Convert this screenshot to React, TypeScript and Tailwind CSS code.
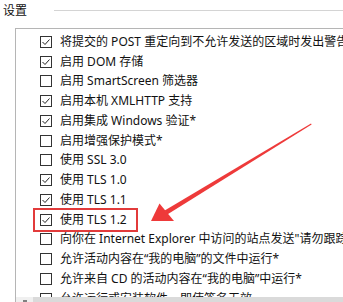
const rows: { label: string; checked: boolean }[] = [
  { label: '将提交的 POST 重定向到不允许发送的区域时发出警告', checked: true },
  { label: '启用 DOM 存储', checked: true },
  { label: '启用 SmartScreen 筛选器', checked: false },
  { label: '启用本机 XMLHTTP 支持', checked: true },
  { label: '启用集成 Windows 验证*', checked: true },
  { label: '启用增强保护模式*', checked: false },
  { label: '使用 SSL 3.0', checked: false },
  { label: '使用 TLS 1.0', checked: true },
  { label: '使用 TLS 1.1', checked: true },
  { label: '使用 TLS 1.2', checked: true },
  { label: '向你在 Internet Explorer 中访问的站点发送"请勿跟踪"请求', checked: false },
  { label: '允许活动内容在“我的电脑”的文件中运行*', checked: false },
  { label: '允许来自 CD 的活动内容在“我的电脑”中运行*', checked: false },
  { label: '允许运行或安装软件，即使签名无效', checked: false },
];

function CheckBox({ checked }: { checked: boolean }) {
  return (
    <svg width="12" height="12" viewBox="0 0 12 12" className="shrink-0">
      <rect x="0.5" y="0.5" width="11" height="11" fill="#fff" stroke="#333" />
      {checked && (
        <polyline points="2.5,6 5,8.5 9.5,3.5" fill="none" stroke="#222" strokeWidth="1" />
      )}
    </svg>
  );
}

export default function App() {
  return (
    <div className="relative w-[343px] h-[302px] overflow-hidden bg-white text-[12px] text-[#111] font-['Noto_Sans','Noto_Sans_CJK_SC',sans-serif] flex flex-col">
      <div className="flex items-center h-[20px] pl-[3px] pt-[1px]">
        <span className="leading-none">设置</span>
        <div className="flex-1 ml-[27px] h-px bg-[#d4d4d4]" />
      </div>
      <div className="mt-[8px] ml-[15px] flex-1 border-l border-t border-[#b5b5b5] flex flex-col overflow-hidden">
        <div className="flex-1 overflow-hidden pt-[3px] pl-[24px]">
          {rows.map((r) => (
            <div key={r.label} className="h-[19.75px] flex items-center gap-[8px] whitespace-nowrap">
              <CheckBox checked={r.checked} />
              <span className="leading-none">{r.label}</span>
            </div>
          ))}
        </div>
        {/* horizontal scrollbar, cut by the screenshot edge */}
        <div className="h-[5px] flex items-end bg-[#f0f0f0]">
          <div className="w-[17px] h-full flex items-end justify-center">
            <div className="w-[4px] h-[2px] bg-[#808080]" />
          </div>
          <div className="flex-1 h-full bg-[#dadada]" />
        </div>
      </div>

      {/* annotation: red box + arrow */}
      <div className="absolute left-[33px] top-[208px] w-[105px] h-[24px] border-[2.5px] border-[#e23b3b]" />
      <svg className="absolute left-0 top-0" width="343" height="302" viewBox="0 0 343 302">
        <polygon
          points="311,123.4 311.6,124.6 167.3,214.6 164.7,210.4"
          fill="#ee3a3a"
        />
        <polygon points="151,221 159.5,203.5 174,221" fill="#ee3a3a" />
      </svg>
    </div>
  );
}
